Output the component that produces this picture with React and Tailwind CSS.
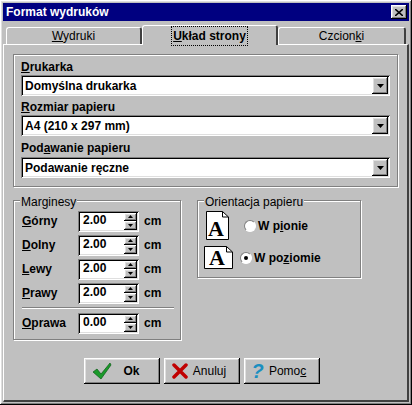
import React from "react";

const raised = "shadow-[inset_-1px_-1px_#000,inset_1px_1px_#fff,inset_-2px_-2px_#808080,inset_2px_2px_#dfdfdf]";
const sunken = "shadow-[inset_1px_1px_#808080,inset_-1px_-1px_#fff,inset_2px_2px_#000,inset_-2px_-2px_#dfdfdf]";
const etched = "border border-[#808080] shadow-[1px_1px_#fff,inset_1px_1px_#fff]";

function Arrow() {
  return (
    <div className={`w-4 h-[17px] bg-[#c0c0c0] ${raised} flex items-center justify-center`}>
      <svg width="7" height="4" viewBox="0 0 7 4"><path d="M0 0h7L3.5 4z" fill="#000" /></svg>
    </div>
  );
}

function Combo({ value }) {
  return (
    <div className={`h-[21px] bg-white ${sunken} flex items-center pl-[4px] pr-[2px]`}>
      <span className="flex-1 text-[12px] font-bold">{value}</span>
      <Arrow />
    </div>
  );
}

function Spin({ label, value }) {
  return (
    <div className="flex items-center h-[24px]">
      <span className="w-[56px] text-[12px] font-bold">
        <u>{label[0]}</u>{label.slice(1)}
      </span>
      <div className={`w-[61px] h-[21px] bg-white ${sunken} flex items-center pl-[5px] pr-[2px]`}>
        <span className="flex-1 text-[12px] font-bold -mt-[3px]">{value}</span>
        <div className="flex flex-col w-[13px] h-[17px]">
          <div className={`flex-1 bg-[#c0c0c0] ${raised} flex items-center justify-center`}>
            <svg width="5" height="3" viewBox="0 0 5 3"><path d="M0 3h5L2.5 0z" fill="#000" /></svg>
          </div>
          <div className={`flex-1 bg-[#c0c0c0] ${raised} flex items-center justify-center`}>
            <svg width="5" height="3" viewBox="0 0 5 3"><path d="M0 0h5L2.5 3z" fill="#000" /></svg>
          </div>
        </div>
      </div>
      <span className="ml-[5px] text-[12px] font-bold">cm</span>
    </div>
  );
}

function PageIcon({ wide }) {
  const w = wide ? 28 : 22, h = wide ? 22 : 28;
  return (
    <svg width={w + 1} height={h + 1} viewBox={`0 0 ${w + 1} ${h + 1}`}>
      <path d={`M0.5 0.5H${w - 5.5}L${w + 0.5} 6V${h + 0.5}H0.5z`} fill="#fff" stroke="#000" />
      <path d={`M${w - 5.5} 0.5V6H${w + 0.5}`} fill="none" stroke="#000" />
      <text x={w / 2 - 1} y={h - 3} textAnchor="middle" fontFamily="Liberation Serif" fontWeight="bold" fontSize="22">A</text>
    </svg>
  );
}

function Radio({ on, children }) {
  return (
    <div className="flex items-center gap-[2px]">
      <div className="w-[12px] h-[12px] rounded-full bg-white border border-[#808080] border-r-white border-b-white flex items-center justify-center">
        {on && <div className="w-[4px] h-[4px] rounded-full bg-black" />}
      </div>
      <span className="text-[12px] font-bold">{children}</span>
    </div>
  );
}

function Btn({ icon, children }) {
  return (
    <div className={`w-[76px] h-[26px] bg-[#c0c0c0] ${raised} flex items-center px-[8px]`}>
      {icon}
      <span className="flex-1 text-center text-[12px]">{children}</span>
    </div>
  );
}

export default function App() {
  return (
    <div className={`w-[412px] h-[405px] bg-[#c0c0c0] ${raised} p-[3px] flex flex-col text-black`} style={{ fontFamily: '"Liberation Sans", Arial, sans-serif' }}>
      <div className="h-[18px] bg-[#000080] flex items-center justify-between pl-[3px] pr-[2px]">
        <span className="text-white text-[12px] font-bold">Format wydruków</span>
        <div className={`w-4 h-[14px] bg-[#c0c0c0] ${raised} flex items-center justify-center`}>
          <svg width="8" height="7" viewBox="0 0 8 7"><path d="M0 0l8 7M8 0L0 7" stroke="#000" strokeWidth="1.6" /></svg>
        </div>
      </div>
      <div className="flex px-[3px] mt-[3px] h-[20px] items-end">
        <div className="w-[136px] h-[17px] border-t border-l border-white border-r-2 border-r-[#404040] rounded-t-[3px] flex items-center justify-center text-[12px]"><span><u>W</u>ydruki</span></div>
        <div className="w-[136px] h-[20px] border-t border-l border-white border-r-2 border-r-[#404040] rounded-t-[3px] flex items-start pt-[1px] justify-center text-[12px] font-bold -mb-px bg-[#c0c0c0] relative z-10"><span className="outline outline-1 outline-dotted px-px"><u>U</u>kład strony</span></div>
        <div className="flex-1 h-[17px] border-t border-l border-white border-r-2 border-r-[#404040] rounded-t-[3px] flex items-center justify-center text-[12px]"><span>Czcion<u>k</u>i</span></div>
      </div>
      <div className="flex-1 border-l border-t border-white border-r-2 border-b-2 border-r-[#404040] border-b-[#404040] px-[9px] pt-[9px]">
        <div className={`${etched} px-[7px] pt-[3px] pb-[8px] flex flex-col`}>
          <span className="text-[12px] font-bold h-[17px]"><u>D</u>rukarka</span>
          <Combo value="Domyślna drukarka" />
          <span className="text-[12px] font-bold h-[19px] pt-[2px]"><u>R</u>ozmiar papieru</span>
          <Combo value="A4 (210 x 297 mm)" />
          <span className="text-[12px] font-bold h-[21px] pt-[3px]">Pod<u>a</u>wanie papieru</span>
          <Combo value="Podawanie ręczne" />
        </div>
        <div className="flex gap-[16px] mt-[13px] items-start">
          <div className={`${etched} w-[168px] relative px-[8px] pt-[8px] pb-[4px]`}>
            <span className="absolute -top-[8px] left-[6px] bg-[#c0c0c0] text-[12px] px-px">Marginesy</span>
            <Spin label="Górny" value="2.00" />
            <Spin label="Dolny" value="2.00" />
            <Spin label="Lewy" value="2.00" />
            <Spin label="Prawy" value="2.00" />
            <div className="border-t border-[#808080] border-b border-b-white my-[2px] mr-[-2px]" />
            <Spin label="Oprawa" value="0.00" />
          </div>
          <div className={`${etched} w-[164px] relative px-[6px] pt-[10px] pb-[8px] flex flex-col gap-[6px]`}>
            <span className="absolute -top-[8px] left-[6px] bg-[#c0c0c0] text-[12px] px-px">Orientacja papieru</span>
            <div className="flex items-center gap-[15px] pl-[2px]"><PageIcon /><Radio>W p<u>i</u>onie</Radio></div>
            <div className="flex items-center gap-[7px]"><PageIcon wide /><Radio on>W po<u>z</u>iomie</Radio></div>
          </div>
        </div>
        <div className="flex justify-center gap-[4px] mt-[18px] pr-[8px]">
          <Btn icon={<svg width="20" height="18" viewBox="0 0 20 18"><path d="M1 10l4-3 4 5L18 1l1 2L9 17z" fill="#1a9a2a" stroke="#0a5a14" strokeWidth="0.7" /></svg>}><b>Ok</b></Btn>
          <Btn icon={<svg width="16" height="16" viewBox="0 0 16 16"><path d="M2 2l12 12M14 2L2 14" stroke="#c00000" strokeWidth="3.5" strokeLinecap="round" /></svg>}>Anuluj</Btn>
          <Btn icon={<span className="text-[20px] font-bold text-[#1a8fc0] leading-none italic">?</span>}>Pomo<u>c</u></Btn>
        </div>
      </div>
    </div>
  );
}
